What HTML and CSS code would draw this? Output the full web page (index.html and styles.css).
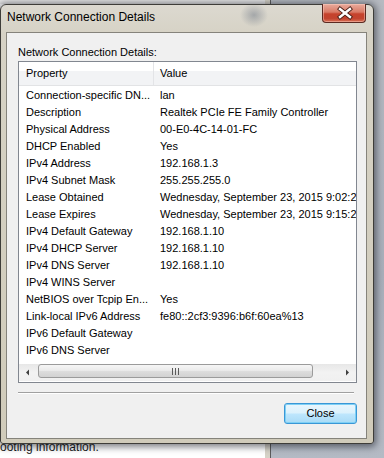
FILE: index.html
```html
<!DOCTYPE html>
<html>
<head>
<meta charset="utf-8">
<title>Network Connection Details</title>
<link rel="stylesheet" href="styles.css">
</head>
<body>
<div class="desk">
  <div class="bgwin">
    <span class="bg-text">ooting information.</span>
  </div>

  <div class="window">
    <div class="titlebar">
      <span class="title">Network Connection Details</span>
      <div class="close-x">
        <svg width="44" height="19" viewBox="0 0 44 19">
          <path d="M17 5 L27 13 M27 5 L17 13" stroke="#4a2018" stroke-width="4.2" stroke-linecap="square" fill="none"/>
          <path d="M17 5 L27 13 M27 5 L17 13" stroke="#ffffff" stroke-width="2.4" stroke-linecap="square" fill="none"/>
        </svg>
      </div>
    </div>

    <div class="client">
      <div class="label">Network Connection Details:</div>
      <div class="listbox">
        <div class="lv-header">
          <div class="hcell hcell-first">Property</div>
          <div class="hcell">Value</div>
        </div>
        <div class="rows">
          <div class="row"><span class="prop">Connection-specific DN...</span><span class="val">lan</span></div>
          <div class="row"><span class="prop">Description</span><span class="val">Realtek PCIe FE Family Controller</span></div>
          <div class="row"><span class="prop">Physical Address</span><span class="val">00-E0-4C-14-01-FC</span></div>
          <div class="row"><span class="prop">DHCP Enabled</span><span class="val">Yes</span></div>
          <div class="row"><span class="prop">IPv4 Address</span><span class="val">192.168.1.3</span></div>
          <div class="row"><span class="prop">IPv4 Subnet Mask</span><span class="val">255.255.255.0</span></div>
          <div class="row"><span class="prop">Lease Obtained</span><span class="val">Wednesday, September 23, 2015 9:02:25 AM</span></div>
          <div class="row"><span class="prop">Lease Expires</span><span class="val">Wednesday, September 23, 2015 9:15:27 AM</span></div>
          <div class="row"><span class="prop">IPv4 Default Gateway</span><span class="val">192.168.1.10</span></div>
          <div class="row"><span class="prop">IPv4 DHCP Server</span><span class="val">192.168.1.10</span></div>
          <div class="row"><span class="prop">IPv4 DNS Server</span><span class="val">192.168.1.10</span></div>
          <div class="row"><span class="prop">IPv4 WINS Server</span><span class="val"></span></div>
          <div class="row"><span class="prop">NetBIOS over Tcpip En...</span><span class="val">Yes</span></div>
          <div class="row"><span class="prop">Link-local IPv6 Address</span><span class="val">fe80::2cf3:9396:b6f:60ea%13</span></div>
          <div class="row"><span class="prop">IPv6 Default Gateway</span><span class="val"></span></div>
          <div class="row"><span class="prop">IPv6 DNS Server</span><span class="val"></span></div>
        </div>
        <div class="hscroll">
          <div class="sbtn">
            <svg width="17" height="17" viewBox="0 0 17 17"><polygon points="7,8.5 10,5.5 10,11.5" fill="#404040"/></svg>
          </div>
          <div class="thumb">
            <svg width="7" height="7" viewBox="0 0 7 7">
              <rect x="0" y="0" width="1" height="7" fill="#5a5a5a"/>
              <rect x="3" y="0" width="1" height="7" fill="#5a5a5a"/>
              <rect x="6" y="0" width="1" height="7" fill="#5a5a5a"/>
            </svg>
          </div>
          <div class="track-rest"></div>
          <div class="sbtn">
            <svg width="17" height="17" viewBox="0 0 17 17"><polygon points="10,8.5 7,5.5 7,11.5" fill="#404040"/></svg>
          </div>
        </div>
      </div>
      <div class="sep"></div>
      <div class="actions">
        <button class="btn">Close</button>
      </div>
    </div>
  </div>
</div>
</body>
</html>
```

FILE: styles.css
```css
html, body {
  margin: 0;
  padding: 0;
}

body {
  font-family: "Liberation Sans", Arial, sans-serif;
  font-size: 11px;
  color: #000;
}

.desk {
  position: relative;
  width: 384px;
  height: 458px;
  overflow: hidden;
  background: linear-gradient(to bottom, #b6bac1 0%, #a9afba 60%, #b4bac4 100%);
}

/* window behind the dialog */
.bgwin {
  position: absolute;
  left: -10px;
  top: -10px;
  width: 281px;
  height: 480px;
  box-sizing: border-box;
  border-right: 1px solid #5c5c5c;
  background:
    linear-gradient(to right, transparent calc(100% - 5px), #d6d2c7 calc(100% - 5px)),
    linear-gradient(to bottom, #e6e6e6 0, #e6e6e6 14px, #ffffff 14px);
}

.bg-text {
  position: absolute;
  left: 10px;
  top: 450px;
  font-size: 12px;
  line-height: 14px;
  color: #1a1a1a;
  white-space: nowrap;
}

/* dialog window */
.window {
  position: absolute;
  left: 0;
  top: 4px;
  width: 374px;
  height: 440px;
  box-sizing: border-box;
  border: 1px solid #3e3d39;
  border-radius: 6px 6px 3px 3px;
  background: linear-gradient(to bottom, #dcd9d0 0, #d6d2c5 30px, #d0cbba 100%);
  box-shadow: 0 1px 7px 2px rgba(20, 24, 32, 0.55);
  display: flex;
  flex-direction: column;
}

.titlebar {
  height: 27px;
  display: flex;
  justify-content: space-between;
  align-items: flex-start;
  padding-left: 6px;
  background: radial-gradient(ellipse 14px 12px at 253px 10px, rgba(120, 128, 140, 0.55), rgba(120, 128, 140, 0));
  border-radius: 5px 5px 0 0;
}

.title {
  margin-top: 4px;
  font-size: 12px;
  line-height: 16px;
  color: #000;
  white-space: nowrap;
}

.close-x {
  width: 44px;
  height: 19px;
  margin-top: -1px;
  margin-right: 7px;
  box-sizing: border-box;
  border: 1px solid #5b2a22;
  border-top: none;
  border-radius: 0 0 4px 4px;
  background: linear-gradient(to bottom, #e9ab9c 0%, #d97a66 45%, #c6422c 55%, #c2432f 80%, #d87257 100%);
  box-shadow: inset 0 0 0 1px rgba(255, 210, 200, 0.45);
  overflow: hidden;
}

.close-x svg {
  display: block;
}

.client {
  flex: 1;
  margin: 0 6px 4px 5px;
  box-sizing: border-box;
  border: 1px solid #85837b;
  background: #f0f0f0;
  padding: 12px 9px 0 11px;
  display: flex;
  flex-direction: column;
}

.label {
  line-height: 14px;
  height: 14px;
  margin-bottom: 2px;
  white-space: nowrap;
}

.listbox {
  width: 339px;
  height: 322px;
  box-sizing: border-box;
  border: 1px solid #828790;
  background: #ffffff;
  overflow: hidden;
  display: flex;
  flex-direction: column;
}

.lv-header {
  height: 24px;
  box-sizing: border-box;
  display: grid;
  grid-template-columns: 135px 1fr;
  border-bottom: 1px solid #e2e3e5;
  background: linear-gradient(to bottom, #ffffff 0, #ffffff 9px, #f2f3f5 9px, #f2f3f5 100%);
}

.hcell {
  line-height: 23px;
  padding-left: 6px;
  white-space: nowrap;
}

.hcell-first {
  padding-left: 7px;
  border-right: 1px solid #e3e4e7;
}

.rows {
  padding-top: 1px;
  height: 278px;
  box-sizing: border-box;
}

.row {
  display: grid;
  grid-template-columns: 135px 1fr;
  height: 17px;
  line-height: 17px;
  white-space: nowrap;
}

.prop {
  padding-left: 7px;
  overflow: hidden;
}

.val {
  padding-left: 6px;
}

.hscroll {
  height: 17px;
  display: flex;
  background: linear-gradient(to bottom, #e7e7e7 0, #f2f2f2 50%, #f0f0f0 100%);
}

.sbtn {
  width: 17px;
  height: 17px;
  flex: none;
}

.sbtn svg {
  display: block;
}

.thumb {
  width: 275px;
  height: 14px;
  margin: 0 0 0 2px;
  box-sizing: border-box;
  border: 1px solid #9b9b9b;
  border-radius: 3px;
  background: linear-gradient(to bottom, #f6f6f6 0, #ebebeb 45%, #dcdcdc 55%, #d2d2d2 100%);
  display: flex;
  align-items: center;
  justify-content: center;
  flex: none;
}

.thumb svg {
  display: block;
}

.track-rest {
  flex: 1;
}

.sep {
  width: 336px;
  height: 1px;
  margin-top: 9px;
  background: #a0a0a0;
  border-bottom: 1px solid #ffffff;
}

.actions {
  display: flex;
  justify-content: flex-end;
  padding-right: 0;
  margin-top: 9px;
}

.btn {
  width: 73px;
  height: 21px;
  box-sizing: border-box;
  border: 1px solid #3a97d6;
  border-radius: 3px;
  background: linear-gradient(to bottom, #eaf6fd 0, #dbf1fc 48%, #bee6fd 52%, #a9dbf6 100%);
  box-shadow: inset 0 0 0 1px #7fd0f5;
  font-family: "Liberation Sans", Arial, sans-serif;
  font-size: 11px;
  color: #000;
  padding: 0;
  line-height: 19px;
}
```
